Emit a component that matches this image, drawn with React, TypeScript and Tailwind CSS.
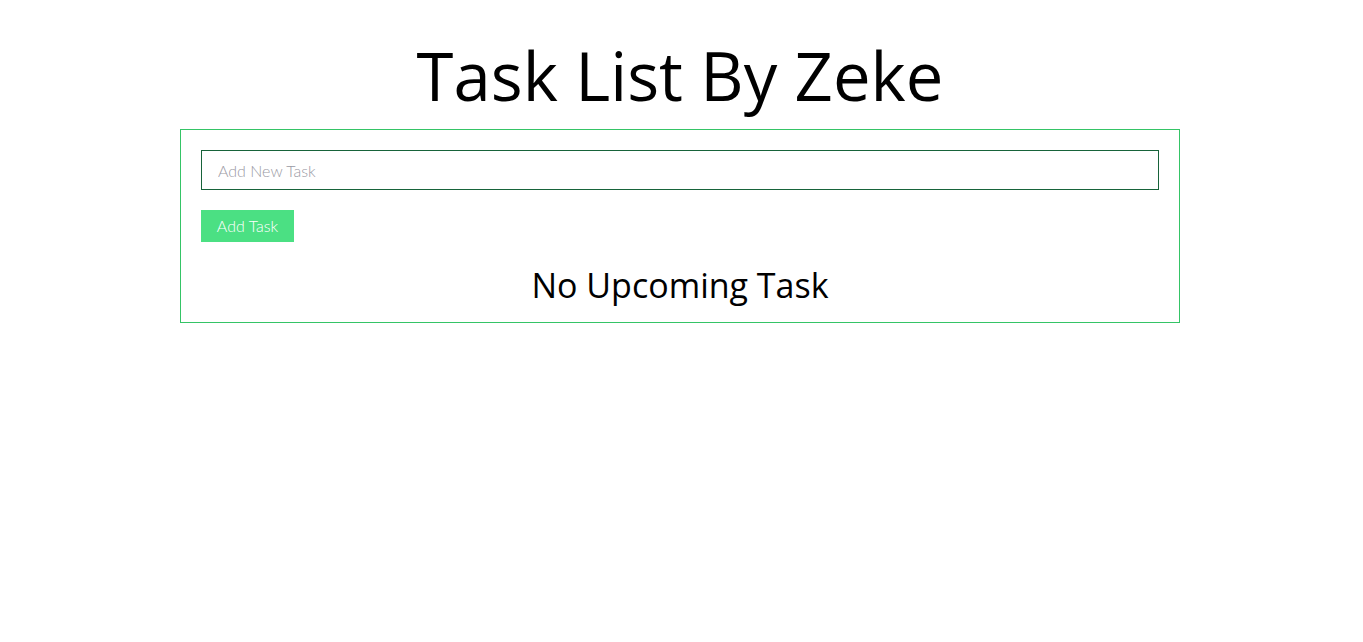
import React from 'react';

export default function App() {
  return (
    <div className="min-h-screen bg-white pr-[3px]" style={{ fontFamily: '"Open Sans", sans-serif' }}>
      <h1 className="mb-[9px] pt-[30px] text-center text-[67px] leading-[90px] font-normal text-black">
        Task List By Zeke
      </h1>
      <div className="mx-auto w-[1000px] border border-[#35c466] p-5">
        <input
          type="text"
          placeholder="Add New Task"
          className="block h-10 w-full border border-[#17633a] px-4 text-[16px] font-light text-black outline-none placeholder:text-[#9a9aa4]"
          style={{ fontFamily: 'Lato, sans-serif' }}
        />
        <button
          className="mt-5 block h-8 w-[93px] bg-[#4be083] text-[16px] font-light text-white"
          style={{ fontFamily: 'Lato, sans-serif' }}
        >
          Add Task
        </button>
        <h2 className="mt-[26px] text-center text-[34px] leading-[34px] font-normal text-black">
          No Upcoming Task
        </h2>
      </div>
    </div>
  );
}
